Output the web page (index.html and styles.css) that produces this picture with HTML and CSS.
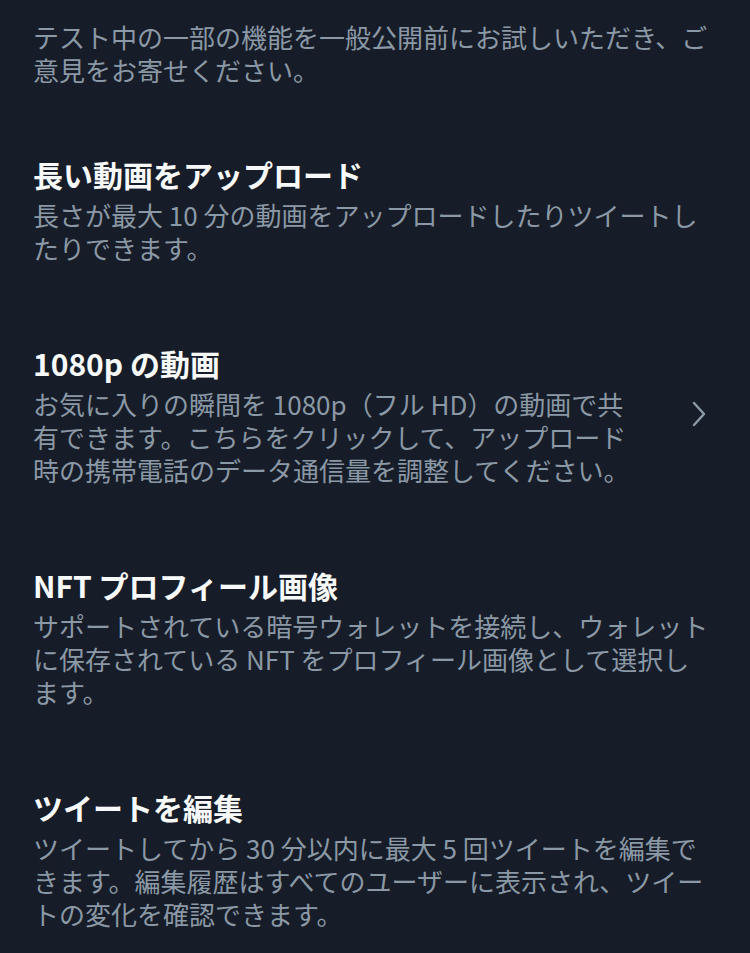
FILE: index.html
```html
<!DOCTYPE html>
<html lang="ja">
<head>
  <meta charset="UTF-8" />
  <meta name="viewport" content="width=device-width, initial-scale=1" />
  <title>テスト中の機能</title>
  <link rel="stylesheet" href="styles.css">
</head>
<body>

  <main class="labs">
    <p class="intro">テスト中の一部の機能を一般公開前にお試しいただき、ご<br>意見をお寄せください。</p>

    <section class="feature">
      <h2>長い動画をアップロード</h2>
      <p>長さが最大 10 分の動画をアップロードしたりツイートし<br>たりできます。</p>
    </section>

    <section class="feature feature-link">
      <div class="feature-text">
        <h2>1080p の動画</h2>
        <p>お気に入りの瞬間を 1080p（フル HD）の動画で共<br>有できます。こちらをクリックして、アップロード<br>時の携帯電話のデータ通信量を調整してください。</p>
      </div>
      <svg class="chevron" viewBox="0 0 16 28" aria-hidden="true">
        <path d="M3 3 L13 14 L3 25" />
      </svg>
    </section>

    <section class="feature">
      <h2>NFT プロフィール画像</h2>
      <p>サポートされている暗号ウォレットを接続し、ウォレット<br>に保存されている NFT をプロフィール画像として選択し<br>ます。</p>
    </section>

    <section class="feature">
      <h2>ツイートを編集</h2>
      <p>ツイートしてから 30 分以内に最大 5 回ツイートを編集で<br>きます。編集履歴はすべてのユーザーに表示され、ツイー<br>トの変化を確認できます。</p>
    </section>
  </main>

</body>
</html>
```

FILE: styles.css
```css
body {
  margin: 0;
  background: #161d28;
  color: #f7f9f9;
  font-family: "Noto Sans CJK JP", "Noto Sans", sans-serif;
}

.labs {
  padding: 20px 33px;
}

.intro,
.feature p {
  margin: 0;
  font-size: 26px;
  line-height: 33px;
  color: #8b98a5;
  white-space: nowrap;
}

.feature {
  margin-top: 67px;
}

.feature + .feature {
  margin-top: 78px;
}

.feature h2 {
  margin: 0 0 3px;
  font-size: 30px;
  line-height: 42px;
  font-weight: 700;
}

.feature-link {
  display: flex;
  align-items: center;
  justify-content: space-between;
}

.chevron {
  width: 16px;
  height: 28px;
  margin-right: 10px;
  fill: none;
  stroke: #8b98a5;
  stroke-width: 2.5;
  stroke-linecap: round;
  stroke-linejoin: round;
}
```
